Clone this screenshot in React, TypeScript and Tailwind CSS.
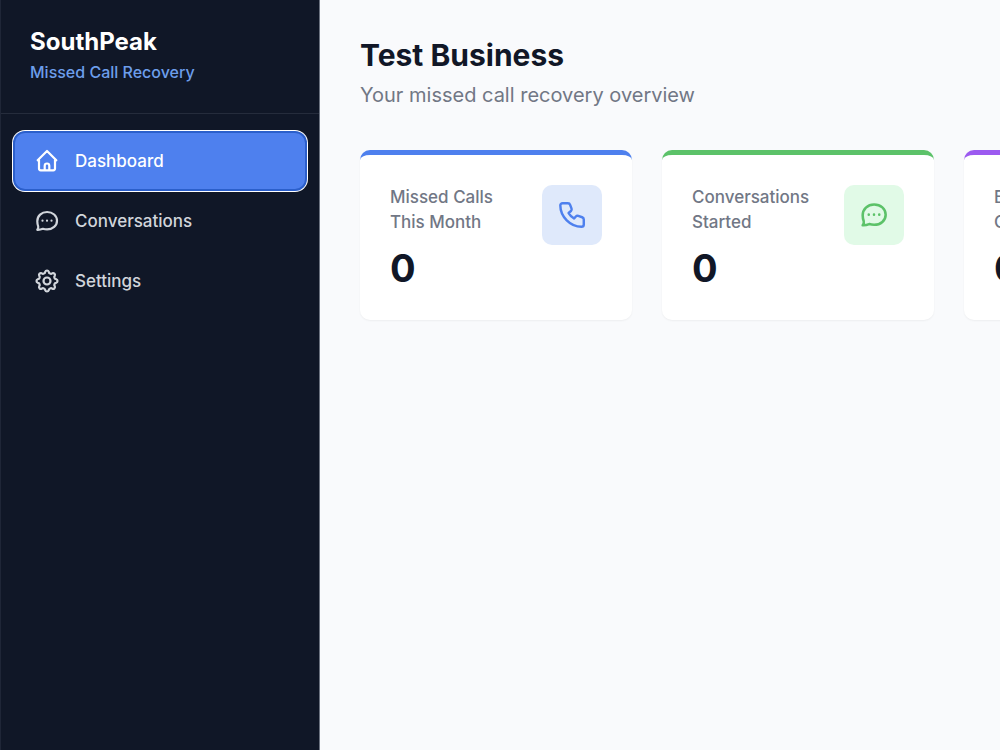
import React from 'react';
import { Calendar } from 'lucide-react';
import clsx from 'clsx';

interface IconProps {
  className?: string;
}

function HomeIcon({ className }: IconProps) {
  return (
    <svg className={className} viewBox="0 0 24 24" fill="none" stroke="currentColor" strokeWidth="2.2" strokeLinecap="round" strokeLinejoin="round" aria-hidden="true">
      <path d="M4 11.300H2.700L12 2l9.300 9.300H20" />
      <path d="M4 11.300v8.300a1.700 1.700 0 0 0 1.700 1.700h12.600a1.700 1.700 0 0 0 1.700-1.700v-8.300" />
      <path d="M9.700 21v-4.200a2.300 2.300 0 0 1 4.600 0V21" />
    </svg>
  );
}

function ChatIcon({ className }: IconProps) {
  return (
    <svg className={className} viewBox="0 0 24 24" fill="none" stroke="currentColor" strokeWidth="2.2" strokeLinecap="round" strokeLinejoin="round" aria-hidden="true">
      <path d="M2.300 20.800c.9-1 1.200-2.200.9-3.500-.6-1.500-.9-3.200-.9-5C2.300 6.900 6.500 3 12.100 3s9.900 3.700 9.900 8.700-4.300 8.700-9.900 8.700c-1.500 0-2.900-.200-4.200-.600-1.700.7-3.600 1.100-5.600 1z" />
      <path d="M7.500 11.700h.01M12 11.700h.01M16.500 11.700h.01" />
    </svg>
  );
}

function GearIcon({ className }: IconProps) {
  return (
    <svg className={className} viewBox="0 0 24 24" fill="none" stroke="currentColor" strokeWidth="2.2" strokeLinecap="round" strokeLinejoin="round" aria-hidden="true">
      <path d="M10.2 2.8A1.9 1.9 0 0 1 13.8 2.8A2.1 2.1 0 0 0 17.3 4.2A1.9 1.9 0 0 1 19.8 6.7A2.1 2.1 0 0 0 21.2 10.2A1.9 1.9 0 0 1 21.2 13.8A2.1 2.1 0 0 0 19.8 17.3A1.9 1.9 0 0 1 17.3 19.8A2.1 2.1 0 0 0 13.8 21.2A1.9 1.9 0 0 1 10.2 21.2A2.1 2.1 0 0 0 6.7 19.8A1.9 1.9 0 0 1 4.2 17.3A2.1 2.1 0 0 0 2.8 13.8A1.9 1.9 0 0 1 2.8 10.2A2.1 2.1 0 0 0 4.2 6.7A1.9 1.9 0 0 1 6.7 4.2A2.1 2.1 0 0 0 10.2 2.8z" />
      <circle cx="12" cy="12" r="3.500" />
    </svg>
  );
}

function PhoneIcon({ className }: IconProps) {
  return (
    <svg className={className} viewBox="0 0 24 24" fill="none" stroke="currentColor" strokeWidth="2.1" strokeLinecap="round" strokeLinejoin="round" aria-hidden="true">
      <path d="M3.900 2h4.600a2 2 0 0 1 1.900 1.300l1.200 3.200a2 2 0 0 1-.5 2.100L9.100 10.300c1.200 2 2.700 3.500 4.700 4.700l1.500-1.700a2 2 0 0 1 2.100-.5l3.300 1.100a2 2 0 0 1 1.400 1.900v4.300a2 2 0 0 1-2 2C10.600 22.100 2 13.500 2 3.900A1.900 1.900 0 0 1 3.900 2z" />
    </svg>
  );
}

const navItems = [
  { label: 'Dashboard', icon: HomeIcon, active: true },
  { label: 'Conversations', icon: ChatIcon, active: false },
  { label: 'Settings', icon: GearIcon, active: false },
];

const stats = [
  { label: 'Missed Calls This Month', value: 0, icon: PhoneIcon, border: 'border-[#4e80ee]', tile: 'bg-[#dfe9fb] text-[#4e80ee]' },
  { label: 'Conversations Started', value: 0, icon: ChatIcon, border: 'border-[#5cc269]', tile: 'bg-[#e1fae7] text-[#5cc269]' },
  { label: 'Bookings Confirmed', value: 0, icon: Calendar, border: 'border-[#9c5af0]', tile: 'bg-purple-100 text-[#9c5af0]' },
];

function Sidebar() {
  return (
    <aside className="w-80 shrink-0 border-l border-r border-l-[#1f2637] border-r-[#6b7280] bg-[#101727] text-white">
      <div className="border-b border-[#252c3c] pt-7 pb-[29px] pl-[29px]">
        <div className="text-[24px] leading-7 font-bold">SouthPeak</div>
        <p className="mt-1 text-[16px] leading-6 font-medium text-[#6d9eeb]">Missed Call Recovery</p>
      </div>
      <nav className="flex flex-col gap-1 px-3.5 py-[19px]">
        {navItems.map(({ label, icon: Icon, active }) => (
          <a
            key={label}
            href="#"
            className={clsx(
              'flex h-14 items-center gap-4 rounded-[10px] px-5 text-[17px] leading-[26px] font-medium',
              active
                ? 'bg-[#4e80ee] text-white shadow-[0_0_0_2px_#2b5fcb,0_0_0_3px_#ffffff]'
                : 'text-[#d1d5db] hover:bg-gray-800'
            )}
          >
            <Icon className="size-6" />
            {label}
          </a>
        ))}
      </nav>
    </aside>
  );
}

export default function App() {
  return (
    <div className="flex min-h-screen bg-[#f9fafc] font-['Inter',sans-serif]">
      <Sidebar />
      <main className="min-w-0 flex-1 overflow-hidden p-10 pt-[37px]">
        <h1 className="text-[30px] leading-9 font-bold text-[#111727]">Test Business</h1>
        <p className="mt-2 text-[20px] leading-7 text-[#717785]">Your missed call recovery overview</p>
        <div className="mt-[41px] flex gap-7.5">
          {stats.map(({ label, value, icon: Icon, border, tile }) => (
            <section key={label} className={clsx('min-h-[170px] w-[272px] shrink-0 rounded-[10px] border-t-5 bg-white px-7.5 pt-7.5 pb-5 shadow-xs', border)}>
              <div className="flex items-start justify-between">
                <div className="w-32">
                  <h2 className="text-[17px] leading-[25px] font-medium text-[#717785]">{label}</h2>
                  <p className="mt-2 text-[38px] leading-[50px] font-bold text-[#111727]">{value}</p>
                </div>
                <div className={clsx('flex size-15 items-center justify-center rounded-[10px]', tile)}>
                  <Icon className="size-7" />
                </div>
              </div>
            </section>
          ))}
        </div>
      </main>
    </div>
  );
}
